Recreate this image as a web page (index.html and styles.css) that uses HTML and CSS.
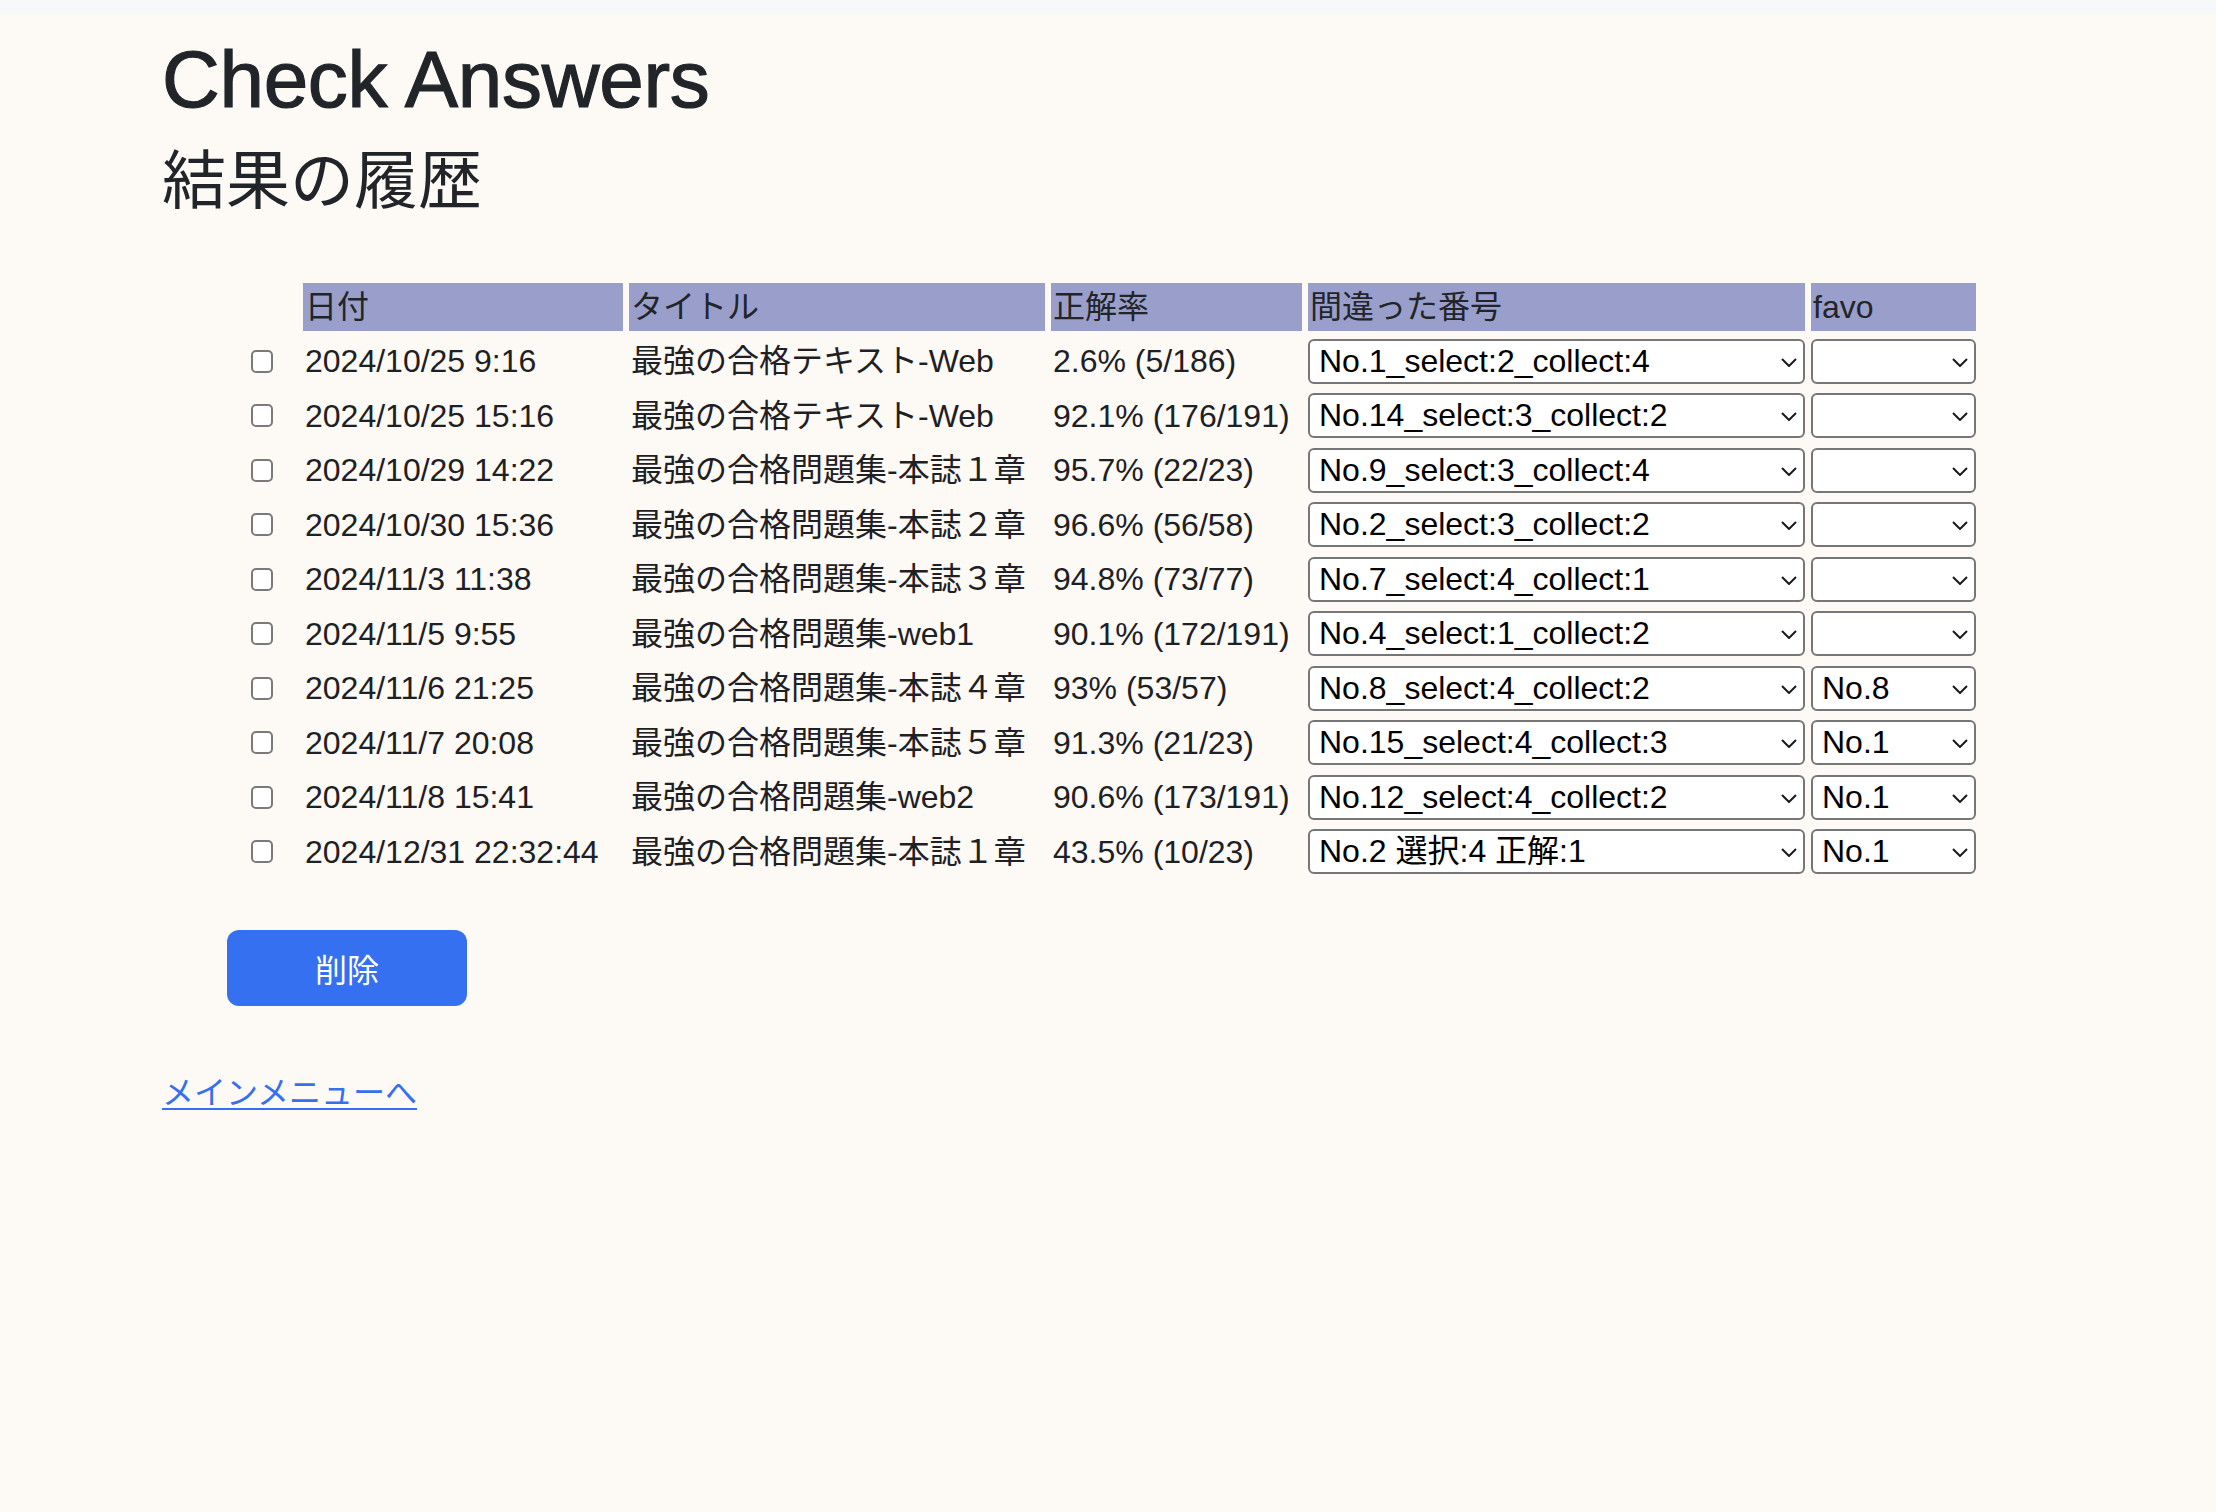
FILE: index.html
```html
<!DOCTYPE html>
<html lang="ja">
<head>
<meta charset="utf-8">
<title>Check Answers</title>
<link rel="stylesheet" href="styles.css">
</head>
<body>
<div class="topbar"></div>
<main class="container">
  <h1 class="title">Check Answers</h1>
  <h2 class="subtitle">結果の履歴</h2>
  <form class="history-form">
    <table class="history">
      <thead>
        <tr>
          <th class="c-check"></th>
          <th class="c-date">日付</th>
          <th class="c-title">タイトル</th>
          <th class="c-rate">正解率</th>
          <th class="c-miss">間違った番号</th>
          <th class="c-favo">favo</th>
        </tr>
      </thead>
      <tbody>
        <tr>
          <td class="c-check"><input type="checkbox" class="chk"></td>
          <td>2024/10/25 9:16</td>
          <td>最強の合格テキスト-Web</td>
          <td>2.6% (5/186)</td>
          <td class="sel-cell"><div class="sel"><select><option>No.1_select:2_collect:4</option></select><svg class="chev" viewBox="0 0 16 9"><path d="M1 1 L8 8 L15 1"/></svg></div></td>
          <td class="sel-cell"><div class="sel"><select><option></option></select><svg class="chev" viewBox="0 0 16 9"><path d="M1 1 L8 8 L15 1"/></svg></div></td>
        </tr>
        <tr>
          <td class="c-check"><input type="checkbox" class="chk"></td>
          <td>2024/10/25 15:16</td>
          <td>最強の合格テキスト-Web</td>
          <td>92.1% (176/191)</td>
          <td class="sel-cell"><div class="sel"><select><option>No.14_select:3_collect:2</option></select><svg class="chev" viewBox="0 0 16 9"><path d="M1 1 L8 8 L15 1"/></svg></div></td>
          <td class="sel-cell"><div class="sel"><select><option></option></select><svg class="chev" viewBox="0 0 16 9"><path d="M1 1 L8 8 L15 1"/></svg></div></td>
        </tr>
        <tr>
          <td class="c-check"><input type="checkbox" class="chk"></td>
          <td>2024/10/29 14:22</td>
          <td>最強の合格問題集-本誌１章</td>
          <td>95.7% (22/23)</td>
          <td class="sel-cell"><div class="sel"><select><option>No.9_select:3_collect:4</option></select><svg class="chev" viewBox="0 0 16 9"><path d="M1 1 L8 8 L15 1"/></svg></div></td>
          <td class="sel-cell"><div class="sel"><select><option></option></select><svg class="chev" viewBox="0 0 16 9"><path d="M1 1 L8 8 L15 1"/></svg></div></td>
        </tr>
        <tr>
          <td class="c-check"><input type="checkbox" class="chk"></td>
          <td>2024/10/30 15:36</td>
          <td>最強の合格問題集-本誌２章</td>
          <td>96.6% (56/58)</td>
          <td class="sel-cell"><div class="sel"><select><option>No.2_select:3_collect:2</option></select><svg class="chev" viewBox="0 0 16 9"><path d="M1 1 L8 8 L15 1"/></svg></div></td>
          <td class="sel-cell"><div class="sel"><select><option></option></select><svg class="chev" viewBox="0 0 16 9"><path d="M1 1 L8 8 L15 1"/></svg></div></td>
        </tr>
        <tr>
          <td class="c-check"><input type="checkbox" class="chk"></td>
          <td>2024/11/3 11:38</td>
          <td>最強の合格問題集-本誌３章</td>
          <td>94.8% (73/77)</td>
          <td class="sel-cell"><div class="sel"><select><option>No.7_select:4_collect:1</option></select><svg class="chev" viewBox="0 0 16 9"><path d="M1 1 L8 8 L15 1"/></svg></div></td>
          <td class="sel-cell"><div class="sel"><select><option></option></select><svg class="chev" viewBox="0 0 16 9"><path d="M1 1 L8 8 L15 1"/></svg></div></td>
        </tr>
        <tr>
          <td class="c-check"><input type="checkbox" class="chk"></td>
          <td>2024/11/5 9:55</td>
          <td>最強の合格問題集-web1</td>
          <td>90.1% (172/191)</td>
          <td class="sel-cell"><div class="sel"><select><option>No.4_select:1_collect:2</option></select><svg class="chev" viewBox="0 0 16 9"><path d="M1 1 L8 8 L15 1"/></svg></div></td>
          <td class="sel-cell"><div class="sel"><select><option></option></select><svg class="chev" viewBox="0 0 16 9"><path d="M1 1 L8 8 L15 1"/></svg></div></td>
        </tr>
        <tr>
          <td class="c-check"><input type="checkbox" class="chk"></td>
          <td>2024/11/6 21:25</td>
          <td>最強の合格問題集-本誌４章</td>
          <td>93% (53/57)</td>
          <td class="sel-cell"><div class="sel"><select><option>No.8_select:4_collect:2</option></select><svg class="chev" viewBox="0 0 16 9"><path d="M1 1 L8 8 L15 1"/></svg></div></td>
          <td class="sel-cell"><div class="sel"><select><option>No.8</option></select><svg class="chev" viewBox="0 0 16 9"><path d="M1 1 L8 8 L15 1"/></svg></div></td>
        </tr>
        <tr>
          <td class="c-check"><input type="checkbox" class="chk"></td>
          <td>2024/11/7 20:08</td>
          <td>最強の合格問題集-本誌５章</td>
          <td>91.3% (21/23)</td>
          <td class="sel-cell"><div class="sel"><select><option>No.15_select:4_collect:3</option></select><svg class="chev" viewBox="0 0 16 9"><path d="M1 1 L8 8 L15 1"/></svg></div></td>
          <td class="sel-cell"><div class="sel"><select><option>No.1</option></select><svg class="chev" viewBox="0 0 16 9"><path d="M1 1 L8 8 L15 1"/></svg></div></td>
        </tr>
        <tr>
          <td class="c-check"><input type="checkbox" class="chk"></td>
          <td>2024/11/8 15:41</td>
          <td>最強の合格問題集-web2</td>
          <td>90.6% (173/191)</td>
          <td class="sel-cell"><div class="sel"><select><option>No.12_select:4_collect:2</option></select><svg class="chev" viewBox="0 0 16 9"><path d="M1 1 L8 8 L15 1"/></svg></div></td>
          <td class="sel-cell"><div class="sel"><select><option>No.1</option></select><svg class="chev" viewBox="0 0 16 9"><path d="M1 1 L8 8 L15 1"/></svg></div></td>
        </tr>
        <tr>
          <td class="c-check"><input type="checkbox" class="chk"></td>
          <td>2024/12/31 22:32:44</td>
          <td>最強の合格問題集-本誌１章</td>
          <td>43.5% (10/23)</td>
          <td class="sel-cell"><div class="sel"><select><option>No.2 選択:4 正解:1</option></select><svg class="chev" viewBox="0 0 16 9"><path d="M1 1 L8 8 L15 1"/></svg></div></td>
          <td class="sel-cell"><div class="sel"><select><option>No.1</option></select><svg class="chev" viewBox="0 0 16 9"><path d="M1 1 L8 8 L15 1"/></svg></div></td>
        </tr>
      </tbody>
    </table>
    <button type="button" class="btn-delete">削除</button>
  </form>
  <p class="back"><a href="#" class="back-link">メインメニューへ</a></p>
</main>
</body>
</html>
```
FILE: styles.css
```css
html, body {
  margin: 0;
  padding: 0;
}
body {
  background: #fdfaf5;
  color: #212529;
  font-family: "Liberation Sans", "Noto Sans CJK JP", sans-serif;
  font-size: 32px;
  line-height: 1.5;
}
.topbar {
  height: 14px;
  background: #f7f8fa;
}
.container {
  padding-left: 162px;
}
.title {
  font-size: 80px;
  font-weight: normal;
  line-height: 1.2;
  margin: 18px 0 14.5px;
  letter-spacing: -0.3px;
  -webkit-text-stroke: 1.2px #212529;
}
.subtitle {
  font-size: 64px;
  font-weight: normal;
  line-height: 1.2;
  margin: 0;
}
.history {
  border-collapse: separate;
  border-spacing: 6px;
  margin: 57.7px 0 0 75px;
}
.history th {
  height: 48px;
  padding: 0 2px;
  background: #9a9ecb;
  font-weight: normal;
  text-align: left;
  vertical-align: middle;
  line-height: 40px;
}
.history td {
  height: 48.5px;
  padding: 0 2px;
  vertical-align: middle;
  white-space: nowrap;
  line-height: 38px;
  color: #1d2024;
}
.history th.c-check,
.history td.c-check {
  width: 54px;
  padding: 0;
  background: transparent;
}
.history th.c-date { width: 316px; }
.history th.c-title { width: 412px; }
.history th.c-rate { width: 247px; }
.history th.c-miss { width: 493px; }
.history th.c-favo { width: 161px; }
.history td.sel-cell {
  padding: 0;
}
.chk {
  appearance: none;
  -webkit-appearance: none;
  display: block;
  width: 22px;
  height: 23px;
  margin: 0 0 0 8px;
  border: 2px solid #7a7a7a;
  border-radius: 5px;
  background: #fff;
  box-sizing: border-box;
}
.sel {
  position: relative;
}
.sel select {
  appearance: none;
  -webkit-appearance: none;
  display: block;
  width: 100%;
  height: 45px;
  box-sizing: border-box;
  border: 2px solid #767676;
  border-radius: 6px;
  background: #fff;
  color: #000;
  font-family: "Liberation Sans", "Noto Sans CJK JP", sans-serif;
  font-size: 32px;
  line-height: 41px;
  padding: 0 36px 0 9px;
  margin: 0;
}
.chev {
  position: absolute;
  right: 8px;
  top: 19px;
  width: 16px;
  height: 9px;
  fill: none;
  stroke: #1a1a1a;
  stroke-width: 2;
  pointer-events: none;
}
.btn-delete {
  display: block;
  width: 240px;
  height: 76px;
  margin: 48px 0 0 65px;
  border: none;
  border-radius: 12px;
  background: #3570f0;
  color: #fff;
  font-family: "Liberation Sans", "Noto Sans CJK JP", sans-serif;
  font-size: 32px;
  padding: 0;
}
.back {
  margin: 63px 0 0;
}
.back-link {
  color: #3570f0;
  text-decoration: underline;
  text-decoration-thickness: 2px;
  text-underline-offset: 4px;
}
```
